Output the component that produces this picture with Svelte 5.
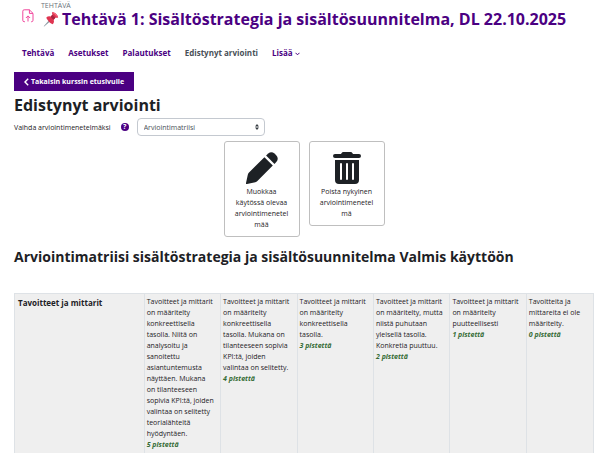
<script>
	const tabs = ['Tehtävä', 'Asetukset', 'Palautukset', 'Edistynyt arviointi'];
	let current = $state('Edistynyt arviointi');
	let method = $state('rubric');

	const criteria = [
		{
			name: 'Tavoitteet ja mittarit',
			levels: [
				{ points: 5, text: 'Tavoitteet ja mittarit on määritelty konkreettisella tasolla. Niitä on analysoitu ja sanoitettu asiantuntemusta näyttäen. Mukana on\u00a0tilanteeseen sopivia KPI:tä, joiden valintaa on selitetty teorialähteitä hyödyntäen.' },
				{ points: 4, text: 'Tavoitteet ja mittarit on määritelty konkreettisella tasolla. Mukana on tilanteeseen sopivia KPI:tä, joiden valintaa\u00a0on selitetty.' },
				{ points: 3, text: 'Tavoitteet ja mittarit on määritelty konkreettisella tasolla.' },
				{ points: 2, text: 'Tavoitteet ja mittarit on määritelty, mutta niistä puhutaan yleisellä tasolla. Konkretia puuttuu.' },
				{ points: 1, text: 'Tavoitteet ja mittarit on määritelty puutteellisesti' },
				{ points: 0, text: 'Tavoitteita ja mittareita ei ole määritelty.' }
			]
		}
	];
</script>

<div class="page">
	<header class="activity">
		<svg class="activity-icon" viewBox="0 0 12 14" fill="none" stroke="#f0479c" aria-hidden="true">
			<path d="M3 12.7H2.2Q.8 12.7.8 11.3V2.2Q.8.8 2.2.8H7.4L11 4.4V11.3Q11 12.7 9.6 12.7H9M7.4.8V4.4H11M6 12.5V7M3.9 9 6 6.9 8.1 9" />
		</svg>
		<div>
			<div class="kind">TEHTÄVÄ</div>
			<h1>
				<svg class="pin" viewBox="0 0 16 16" aria-hidden="true">
					<path d="M5.8 9.4 7 10.6 1.2 15.6.7 15.2Z" fill="#8c9aa3" />
					<path d="M9.2 1.2Q10.5.5 12.8 2.6T15.2 6.2Q14.5 7.2 12.6 6.6L10.7 8.8Q11.8 11.8 9.9 13.3 6.2 12.2 3.2 6.7 4.8 4.9 7.8 5.5L9.5 3.5Q8.7 2.2 9.2 1.2Z" fill="#df3450" />
					<path d="M7.8 5.5Q8.2 7.6 10.7 8.8L12.6 6.6Q10.1 5.7 9.5 3.5Z" fill="#a8233f" />
					<path d="M9.9 1.6Q11.6 2.1 14.2 5.7" fill="none" stroke="#ff7488" />
				</svg>
				Tehtävä 1: Sisältöstrategia ja sisältösuunnitelma, DL 22.10.2025
			</h1>
		</div>
	</header>

	<nav class="tabs">
		{#each tabs as tab}
			<a href="#{tab}" class:active={tab === current} onclick={() => (current = tab)}>{tab}</a>
		{/each}
		<button class="more">
			Lisää
			<svg width="5" height="4" viewBox="0 0 5 4" fill="none" stroke="currentColor" aria-hidden="true">
				<path d="M.5.8 2.5 2.8 4.5.8" />
			</svg>
		</button>
	</nav>

	<main>
		<a class="back" href="#kurssi">
			<svg width="5" height="8" viewBox="0 0 5 8" fill="none" stroke="currentColor" stroke-width="1.4" aria-hidden="true">
				<path d="M4.2.8 1 4 4.2 7.2" />
			</svg>
			Takaisin kurssin etusivulle
		</a>

		<h2>Edistynyt arviointi</h2>

		<div class="method">
			<label for="method">Vaihda arviointimenetelmäksi</label>
			<button class="help" aria-label="Ohje">?</button>
			<div class="select">
				<select id="method" bind:value={method}>
					<option value="rubric">Arviointimatriisi</option>
				</select>
				<svg width="4" height="6" viewBox="0 0 4 6" fill="#343a40" aria-hidden="true">
					<path d="M2 0 4 2.4H0ZM2 6 0 3.6H4Z" />
				</svg>
			</div>
		</div>

		<div class="actions">
			<button class="action">
				<svg viewBox="0 0 32 32" fill="#1d2125" aria-hidden="true">
					<path d="M18.4 5.2 26.8 13.6 11.4 29Q10.5 29.9 9.3 30.2L1 32Q-.3 32.2 0 30.9L1.8 22.7Q2.1 21.5 3 20.6Z" />
					<path d="M20.1 3.5 22.2 1.5Q25.4-1 28.5 1.6L30.4 3.5Q33 6.6 30.5 9.8L28.5 11.9Z" />
				</svg>
				Muokkaa käytössä olevaa arviointimenetelmää
			</button>
			<button class="action">
				<svg viewBox="0 0 32 32" fill="#1d2125" aria-hidden="true">
					<path d="M10.5 1.2Q11.1 0 12.4 0H19.6Q20.9 0 21.5 1.2L22 2H28Q30 2 30 4T28 6H4Q2 6 2 4T4 2H10Z" />
					<path fill-rule="evenodd" d="M4 8H28V28Q28 32 24 32H8Q4 32 4 28ZM9 12V27Q9 28 10 28T11 27V12Q11 11 10 11T9 12ZM15 12V27Q15 28 16 28T17 27V12Q17 11 16 11T15 12ZM21 12V27Q21 28 22 28T23 27V12Q23 11 22 11T21 12Z" />
				</svg>
				Poista nykyinen arviointimenetelmä
			</button>
		</div>

		<h3>Arviointimatriisi sisältöstrategia ja sisältösuunnitelma Valmis käyttöön</h3>

		<table>
			<tbody>
				{#each criteria as criterion}
					<tr>
						<th scope="row">{criterion.name}</th>
						{#each criterion.levels as level}
							<td>
								{level.text}
								<div class="score">{level.points} pistettä</div>
							</td>
						{/each}
					</tr>
				{/each}
			</tbody>
		</table>
	</main>
</div>

<style>
	:global(body) {
		background: #fff;
	}

	.page {
		--brand: #4b0082;
		padding: 2px 8px 0 14px;
		font-family: 'Open Sans', 'Noto Sans', sans-serif;
		font-size: 7px;
		line-height: 11px;
		color: #1d2125;
	}

	h1, h2, h3 {
		margin: 0;
		font-weight: 700;
	}

	a {
		text-decoration: none;
	}

	button, select {
		font: inherit;
		color: inherit;
	}

	button {
		padding: 0;
		border: none;
		background: none;
		cursor: pointer;
	}

	/* header */
	.activity {
		display: flex;
		align-items: flex-start;
		gap: 7px;
		padding-left: 8px;
	}

	.activity-icon {
		width: 12px;
		height: 14px;
		margin-top: 7px;
	}

	.kind {
		line-height: 8px;
		color: #6a737b;
	}

	h1 {
		display: flex;
		align-items: center;
		gap: 3px;
		padding-left: 2px;
		font-size: 16px;
		line-height: 18px;
		color: var(--brand);
	}

	.pin {
		flex: none;
		width: 16px;
		height: 16px;
	}

	/* tabs */
	.tabs {
		display: flex;
		gap: 14px;
		padding: 19px 8px 0;
		font-size: 8px;
		font-weight: 700;
	}

	.tabs a, .more {
		color: var(--brand);
	}

	.tabs a.active {
		color: #495057;
	}

	/* content */
	.back {
		display: inline-flex;
		align-items: center;
		gap: 2px;
		margin-top: 14px;
		padding: 4px 10px;
		background: var(--brand);
		color: #fff;
		font-weight: 700;
	}

	h2 {
		margin-top: 4px;
		font-size: 16px;
		line-height: 20px;
	}

	.method {
		display: flex;
		align-items: center;
		margin-top: 3px;
	}

	.help {
		width: 8px;
		height: 8px;
		margin: 0 8px 0 10px;
		border-radius: 50%;
		background: var(--brand);
		color: #fff;
		font-weight: 700;
		line-height: 8px;
	}

	.select {
		position: relative;
		width: 128px;
	}

	.select select {
		appearance: none;
		width: 100%;
		height: 18px;
		padding: 0 6px;
		border: 1px solid #c4c9d0;
		border-radius: 4px;
		background: #fff;
		color: #495057;
	}

	.select svg {
		position: absolute;
		top: 6px;
		right: 6px;
		pointer-events: none;
	}

	.actions {
		display: flex;
		justify-content: center;
		align-items: flex-start;
		gap: 9px;
		margin-top: 5px;
	}

	.action {
		width: 76px;
		padding: 10px 10px 6px;
		border: 1px solid #bfbfbf;
		border-radius: 3px;
		overflow-wrap: anywhere;
	}

	.action svg {
		display: block;
		width: 32px;
		height: 32px;
		margin: 0 auto 2px;
	}

	h3 {
		margin: 11px 0 27px;
		font-size: 14px;
		line-height: 18px;
	}

	/* rubric */
	table {
		width: 100%;
		border-collapse: collapse;
		table-layout: fixed;
		background: #efefef;
	}

	th, td {
		box-sizing: border-box;
		padding: 2px 2px 14px;
		border: 1px solid #dee2e6;
		text-align: left;
		vertical-align: top;
	}

	th {
		width: 22.4%;
		padding: 3px;
		font-size: 8px;
	}

	td {
		width: 13.2%;
	}

	td:last-child {
		width: auto;
	}

	.score {
		color: #346b34;
		font-style: italic;
		font-weight: 700;
	}
</style>
